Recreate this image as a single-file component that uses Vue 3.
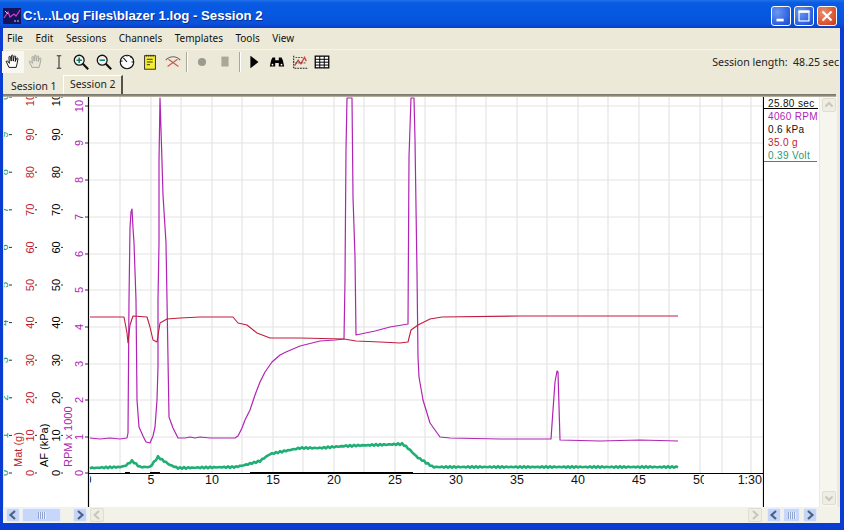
<script setup>
const menus = ['File', 'Edit', 'Sessions', 'Channels', 'Templates', 'Tools', 'View']

const toPts = (arr) => arr.map((p) => p.join(',')).join(' ')

const rpm = toPts([[90,438],[100,439],[110,438],[120,439],[127,438],[128,433],[129,300],[130,228],[131,212],[132,209],[133,228],[134,243],[136,300],[137,400],[139,427],[143,436],[146,442],[150,443],[153,436],[155,427],[157,400],[158,367],[158,300],[159,243],[159,195],[159,162],[160,98],[162,162],[163,195],[166,243],[167,300],[169,417],[173,428],[178,438],[185,438],[190,437],[195,438],[200,437],[210,438],[235,438],[238,436],[242,428],[245,420],[250,410],[255,395],[260,382],[265,372],[272,362],[280,355],[286,352],[300,346],[320,341],[335,340],[344,339],[345,280],[346,150],[347,98],[352,98],[353,197],[355,257],[356,335],[375,331],[390,327],[408,324],[409,157],[411,98],[414,98],[415,140],[417,273],[418,357],[419,377],[423,400],[430,423],[440,437],[450,438],[500,439],[551,439],[553,410],[555,382],[557,371],[558,372],[560,440],[600,441],[640,440],[678,441]])

const red = toPts([[90,317],[124,317],[127,333],[128,343],[130,325],[133,316],[147,317],[150,327],[153,340],[157,342],[160,323],[167,319],[180,318],[200,317],[233,317],[238,323],[247,325],[257,333],[270,338],[300,338],[344,339],[356,341],[380,342],[400,343],[408,342],[411,330],[418,325],[430,319],[442,317],[520,316],[678,316]])

const greenKeys = [[90,468],[120,467],[125,466],[132,461],[140,467],[150,467],[158,457],[170,465],[178,468],[235,467],[245,465],[260,461],[270,454],[285,451],[300,448],[320,448],[345,446],[403,444],[410,450],[417,457],[433,467],[450,467],[678,467]]
const green = toPts((() => {
  const out = []
  for (let x = 90; x <= 678; x += 2) {
    let i = 0
    while (i < greenKeys.length - 2 && greenKeys[i + 1][0] < x) i++
    const [x0, y0] = greenKeys[i]
    const [x1, y1] = greenKeys[i + 1]
    const y = y0 + ((y1 - y0) * (x - x0)) / (x1 - x0)
    out.push([x, +(y + Math.sin(x * 1.7) * 0.8).toFixed(1)])
  }
  return out
})())

const vGrid = [120, 151, 181, 212, 242, 273, 303, 334, 364, 395, 425, 456, 486, 517, 547, 578, 608, 639, 669, 700, 722, 751]
const hGrid = [437, 400, 364, 327, 290, 254, 217, 180, 143, 106]
const rpmTicks = hGrid.map((y, i) => ({ y, t: String(i + 1) }))
const tenTicks = Array.from({ length: 11 }, (_, i) => ({ y: 473 - i * 37.6, t: String(i * 10) }))
const voltTicks = Array.from({ length: 11 }, (_, i) => ({ y: 473 - i * 37.6, t: String(i % 10) }))
const xLabels = [5, 10, 15, 20, 25, 30, 35, 40, 45].map((n, i) => ({ x: 151 + i * 61, t: String(n) }))
const blackRuns = [[125, 130], [150, 160], [250, 413]]
</script>

<template>
  <div class="win">
    <header class="title">
      <svg class="app-icon" viewBox="0 0 18 16">
        <rect width="18" height="16" fill="#14145c" />
        <path d="M1 10 L5 4 L7 9 L11 6 L13 8 L17 2" fill="none" stroke="#d040c0" stroke-width="1.2" />
        <path d="M2 3 L5 6 M11 13 h2 M14 13 h2" fill="none" stroke="#c8d0f0" stroke-width="1" />
      </svg>
      <span class="title-text">C:\...\Log Files\blazer 1.log - Session 2</span>
      <div class="caps">
        <div class="cap blue">
          <svg viewBox="0 0 20 20"><rect x="5" y="13" width="8" height="3" fill="#fff" /></svg>
        </div>
        <div class="cap blue">
          <svg viewBox="0 0 20 20"><rect x="4.5" y="4.5" width="11" height="11" fill="none" stroke="#fff" stroke-width="1.3" /><rect x="4" y="4" width="12" height="2.5" fill="#fff" /></svg>
        </div>
        <div class="cap close">
          <svg viewBox="0 0 20 20"><path d="M5 5 L15 15 M15 5 L5 15" stroke="#fff" stroke-width="2.4" /></svg>
        </div>
      </div>
    </header>

    <div class="body">
      <nav class="menu">
        <span v-for="m in menus" :key="m">{{ m }}</span>
      </nav>

      <div class="toolbar">
        <div class="tool active">
          <svg viewBox="0 0 20 20"><path d="M5.5 16 L2.5 9.5 C2.5 8.5 4 8.5 4.5 9.5 L6 11.5 L5.5 4.5 C5.5 3.5 7 3.5 7.3 4.5 L8 9 L8.3 3 C8.4 2 10 2 10 3 L10.3 9 L11.3 3.8 C11.5 2.9 13 3 13 4 L12.5 9.5 L14 6 C14.4 5.2 15.7 5.6 15.5 6.6 L14.5 12 L13.5 16 Z" fill="#fff" stroke="#000" stroke-width="1" /></svg>
        </div>
        <div class="tool">
          <svg viewBox="0 0 20 20"><path d="M5.5 16 L2.5 9.5 C2.5 8.5 4 8.5 4.5 9.5 L6 11.5 L5.5 4.5 C5.5 3.5 7 3.5 7.3 4.5 L8 9 L8.3 3 C8.4 2 10 2 10 3 L10.3 9 L11.3 3.8 C11.5 2.9 13 3 13 4 L12.5 9.5 L14 6 C14.4 5.2 15.7 5.6 15.5 6.6 L14.5 12 L13.5 16 Z" fill="#e8e6da" stroke="#a8a89c" stroke-width="1.1" /></svg>
        </div>
        <div class="tool">
          <svg viewBox="0 0 20 20"><path d="M7.5 3 H12.5 M10 3 V17 M7.5 17 H12.5" stroke="#333" stroke-width="1.2" fill="none" /></svg>
        </div>
        <div class="tool">
          <svg viewBox="0 0 20 20"><circle cx="8" cy="8" r="5.5" fill="#eef4f4" stroke="#111" stroke-width="1.4" /><path d="M12 12 L18 18" stroke="#111" stroke-width="2.4" /><path d="M5 8 H11 M8 5 V11" stroke="#067a5a" stroke-width="1.6" /></svg>
        </div>
        <div class="tool">
          <svg viewBox="0 0 20 20"><circle cx="8" cy="8" r="5.5" fill="#eef4f4" stroke="#111" stroke-width="1.4" /><path d="M12 12 L18 18" stroke="#111" stroke-width="2.4" /><path d="M5 8 H11" stroke="#067a5a" stroke-width="1.6" /></svg>
        </div>
        <div class="tool">
          <svg viewBox="0 0 20 20"><circle cx="10" cy="10" r="7.5" fill="#fff" stroke="#111" stroke-width="1.3" /><path d="M10 10 L6 5.5 M5 9 L3.5 9 M14 5 L15 4 M10 4 L10 3 M15 10 L17 10" stroke="#111" stroke-width="1.2" /></svg>
        </div>
        <div class="tool">
          <svg viewBox="0 0 20 20"><rect x="4" y="3" width="12" height="15" fill="#f6ee2c" stroke="#222" stroke-width="1" /><path d="M6 2 V4 M8.500 2 V4 M11 2 V4 M13.500 2 V4 M6.500 7 H13 M6.500 10 H13 M6.500 13 H10" stroke="#222" stroke-width="1" /></svg>
        </div>
        <div class="tool">
          <svg viewBox="0 0 20 20"><path d="M2 8 C6 3 14 3 18 8" fill="none" stroke="#666" stroke-width="1.2" /><path d="M4 15 L15 7 M5 7 L16 15" stroke="#c9584c" stroke-width="1.2" /></svg>
        </div>
        <i class="sep"></i>
        <div class="tool">
          <svg viewBox="0 0 20 20"><circle cx="10" cy="10" r="4.5" fill="#9a9a90" /></svg>
        </div>
        <div class="tool">
          <svg viewBox="0 0 20 20"><rect x="6" y="4" width="8" height="11" fill="#a8a79a" /></svg>
        </div>
        <i class="sep"></i>
        <div class="tool">
          <svg viewBox="0 0 20 20"><path d="M6 3 L15 10 L6 17 Z" fill="#000" /></svg>
        </div>
        <div class="tool">
          <svg viewBox="0 0 20 20"><path d="M2 15 L3.500 8 L5 5 H8 V8 H12 V5 H15 L16.500 8 L18 15 H12 V11 H8 V15 Z" fill="#000" /><circle cx="5" cy="13" r="1" fill="#fff" /><circle cx="15" cy="13" r="1" fill="#fff" /></svg>
        </div>
        <div class="tool">
          <svg viewBox="0 0 20 20"><path d="M3 3 V17 H18" fill="none" stroke="#222" stroke-width="1.2" stroke-dasharray="2 1" /><path d="M4 14 L8 8 L11 12 L15 5 L17 9" fill="none" stroke="#d04040" stroke-width="1.5" /><path d="M5 5 H13 M5 11 H16" stroke="#444" stroke-width="1" stroke-dasharray="2 1" /></svg>
        </div>
        <div class="tool">
          <svg viewBox="0 0 20 20"><rect x="2.500" y="3.500" width="15" height="13" fill="#fff" stroke="#000" stroke-width="1.400" /><path d="M2.500 7 H17.500 M2.500 10.200 H17.500 M2.500 13.400 H17.500 M7.500 3.500 V16.500 M12.500 3.500 V16.500" stroke="#000" stroke-width="1.100" /></svg>
        </div>
        <span class="session-length">Session length:&nbsp; 48.25 sec</span>
      </div>

      <div class="tabs">
        <div class="tab">Session 1</div>
        <div class="tab current">Session 2</div>
      </div>
      <div class="rule"></div>

      <div class="chart-row">
        <svg class="plot" viewBox="4 97 760 410" width="760" height="410">
          <defs>
            <clipPath id="xclip"><rect x="90" y="474" width="614" height="20" /></clipPath>
            <clipPath id="plotclip"><rect x="89" y="97" width="674" height="377" /></clipPath>
          </defs>
          <rect x="4" y="97" width="760" height="410" fill="#fff" />

          <g stroke="#e4e4e4" stroke-width="1.200">
            <line v-for="x in vGrid" :key="x" :x1="x" :x2="x" y1="97" y2="473" />
            <line v-for="y in hGrid" :key="y" x1="89" x2="763" :y1="y" :y2="y" />
          </g>

          <g clip-path="url(#plotclip)" fill="none" stroke-linejoin="round">
            <polyline :points="green" stroke="#1fae74" stroke-width="2.600" />
            <polyline :points="rpm" stroke="#b024b4" stroke-width="1.200" />
            <polyline :points="red" stroke="#c21c3c" stroke-width="1.100" />
          </g>

          <g class="ytick volt">
            <g v-for="(k, i) in voltTicks" :key="i">
              <text :transform="`translate(8 ${k.y}) rotate(-90)`" text-anchor="middle">{{ k.t }}</text>
              <line x1="9" x2="12" :y1="k.y" :y2="k.y" stroke="#333" />
            </g>
          </g>
          <g class="ytick mat">
            <g v-for="k in tenTicks" :key="k.t">
              <text :transform="`translate(34 ${k.y}) rotate(-90)`" text-anchor="middle">{{ k.t }}</text>
              <line x1="35" x2="37" :y1="k.y" :y2="k.y" stroke="#333" />
            </g>
          </g>
          <g class="ytick af">
            <g v-for="k in tenTicks" :key="k.t">
              <text :transform="`translate(60 ${k.y}) rotate(-90)`" text-anchor="middle">{{ k.t }}</text>
              <line x1="61" x2="63" :y1="k.y" :y2="k.y" stroke="#333" />
            </g>
          </g>
          <g class="ytick rpm">
            <text transform="translate(83 473) rotate(-90)" text-anchor="middle">0</text>
            <line x1="85" x2="88" y1="473" y2="473" stroke="#333" />
            <g v-for="k in rpmTicks" :key="k.t">
              <text :transform="`translate(83 ${k.y}) rotate(-90)`" text-anchor="middle">{{ k.t }}</text>
              <line x1="85" x2="88" :y1="k.y" :y2="k.y" stroke="#333" />
            </g>
          </g>

          <text class="ytick mat" transform="translate(22 467) rotate(-90)">Mat (g)</text>
          <text class="ytick af" transform="translate(48 467) rotate(-90)">AF (kPa)</text>
          <text class="ytick rpm" transform="translate(72 467) rotate(-90)">RPM x 1000</text>

          <line x1="88.500" x2="88.500" y1="97" y2="507" stroke="#000" stroke-width="1.200" />
          <line x1="763.500" x2="763.500" y1="97" y2="507" stroke="#000" stroke-width="1.200" />
          <line x1="88" x2="764" y1="473.500" y2="473.500" stroke="#000" />
          <line v-for="r in blackRuns" :key="r[0]" :x1="r[0]" :x2="r[1]" y1="473" y2="473" stroke="#000" stroke-width="2" />

          <g class="xtick" clip-path="url(#xclip)">
            <text x="88" y="484" text-anchor="middle">0</text>
            <text v-for="l in xLabels" :key="l.t" :x="l.x" y="484" text-anchor="middle">{{ l.t }}</text>
            <text x="700" y="484" text-anchor="middle">50</text>
          </g>
          <text class="xtick" x="762" y="484" text-anchor="end">1:30</text>
        </svg>

        <div class="legend">
          <div class="lg time">25.80 sec</div>
          <div class="lg c-rpm">4060 RPM</div>
          <div class="lg c-af">0.6 kPa</div>
          <div class="lg c-mat">35.0 g</div>
          <div class="lg c-volt">0.39 Volt</div>
        </div>

        <div class="vscroll">
          <div class="sbtn off">
            <svg viewBox="0 0 12 12"><path d="M2.500 7.500 L6 4 L9.500 7.500" fill="none" stroke="#c9c7ba" stroke-width="2" /></svg>
          </div>
          <div class="sbtn off">
            <svg viewBox="0 0 12 12"><path d="M2.500 4.500 L6 8 L9.500 4.500" fill="none" stroke="#c9c7ba" stroke-width="2" /></svg>
          </div>
        </div>
      </div>

      <div class="hscroll-row">
        <div class="hs left">
          <div class="sbtn on">
            <svg viewBox="0 0 12 12"><path d="M8 2 L3.500 6 L8 10" fill="none" stroke="#4d6185" stroke-width="2.200" /></svg>
          </div>
          <div class="thumb wide"><span class="grip"></span></div>
          <div class="sbtn on push">
            <svg viewBox="0 0 12 12"><path d="M4 2 L8.500 6 L4 10" fill="none" stroke="#4d6185" stroke-width="2.200" /></svg>
          </div>
        </div>
        <div class="hs mid">
          <div class="sbtn off">
            <svg viewBox="0 0 12 12"><path d="M8 2 L3.500 6 L8 10" fill="none" stroke="#c9c7ba" stroke-width="2" /></svg>
          </div>
          <div class="sbtn off push">
            <svg viewBox="0 0 12 12"><path d="M4 2 L8.500 6 L4 10" fill="none" stroke="#c9c7ba" stroke-width="2" /></svg>
          </div>
        </div>
        <div class="hs right">
          <div class="sbtn on">
            <svg viewBox="0 0 12 12"><path d="M8 2 L3.500 6 L8 10" fill="none" stroke="#4d6185" stroke-width="2.200" /></svg>
          </div>
          <div class="thumb narrow"><span class="grip"></span></div>
          <div class="sbtn on">
            <svg viewBox="0 0 12 12"><path d="M4 2 L8.500 6 L4 10" fill="none" stroke="#4d6185" stroke-width="2.200" /></svg>
          </div>
        </div>
      </div>
    </div>
  </div>
</template>

<style>
html, body { margin: 0; background: #0a3ad0; }
</style>

<style scoped>
.win {
  width: 844px;
  height: 530px;
  overflow: hidden;
  display: flex;
  flex-direction: column;
  background: #0a3cd2;
  font-family: "Liberation Sans", Arial, sans-serif;
}
.title {
  height: 28px;
  flex: none;
  display: flex;
  align-items: center;
  padding: 3px 7px 0 3px;
  box-sizing: border-box;
  background: linear-gradient(#1f72e6 0, #0a5ae2 3px, #0558e0 14px, #0a50d8 24px, #0a3ccc 28px);
}
.app-icon { width: 18px; height: 16px; }
.title-text {
  margin-left: 2px;
  color: #fff;
  font: bold 13.200px "Liberation Sans", Arial, sans-serif;
  white-space: nowrap;
  text-shadow: 1px 1px 0 #0a2c9c;
}
.caps { margin-left: auto; display: flex; gap: 3px; }
.cap { width: 20px; height: 20px; border: 1px solid #fff; border-radius: 3px; box-sizing: border-box; }
.cap svg { display: block; width: 18px; height: 18px; }
.cap.blue { background: radial-gradient(circle at 30% 30%, #6c98f0, #2a5ee0 70%, #1c48c4); }
.cap.close { background: radial-gradient(circle at 30% 30%, #e89070, #d8502c 70%, #b83c18); }

.body {
  width: 837px;
  height: 495px;
  margin-left: 3px;
  flex: none;
  background: #ece9d8;
  display: flex;
  flex-direction: column;
}
.menu {
  height: 22px;
  flex: none;
  display: flex;
  align-items: center;
  gap: 12.5px;
  padding: 0 0 2px 4px;
  box-sizing: border-box;
  font: 10px "Noto Sans", Tahoma, sans-serif;
  color: #111;
  border-bottom: 1px solid #f6f5ec;
}
.toolbar {
  height: 24px;
  flex: none;
  display: flex;
  align-items: center;
  box-sizing: border-box;
}
.tool {
  width: 22.800px;
  height: 22px;
  flex: none;
  display: flex;
  align-items: center;
  justify-content: center;
}
.tool.active { margin-left: -1.400px; background: #f8f7f1; }
.tool svg { width: 18px; height: 18px; }
.sep {
  width: 1px;
  height: 20px;
  flex: none;
  margin: 0 3px 0 2.500px;
  background: #aca899;
  box-shadow: 1px 0 0 #fff;
}
.session-length {
  margin-left: auto;
  margin-right: 1px;
  font: 10.600px "Noto Sans", Tahoma, sans-serif;
  color: #222;
  white-space: nowrap;
}
.tabs {
  height: 20px;
  flex: none;
  display: flex;
  align-items: flex-end;
  padding-left: 2px;
}
.tab {
  font: 10.400px "Noto Sans", Tahoma, sans-serif;
  color: #222;
  height: 16px;
  line-height: 16px;
  width: 57px;
  box-sizing: border-box;
  padding-left: 6px;
  white-space: nowrap;
}
.tab.current {
  height: 19px;
  line-height: 17px;
  width: 60px;
  margin-left: 1px;
  padding-left: 6px;
  border-top: 1px solid #fff;
  border-left: 1px solid #fff;
  border-right: 2px solid #55524a;
}
.rule {
  height: 3px;
  flex: none;
  width: 833px;
  background: linear-gradient(#77736a, #8f8b7e 60%, #c9c6b6);
}
.chart-row {
  height: 410px;
  flex: none;
  display: flex;
  padding-left: 1px;
}
.plot { flex: none; display: block; }
.ytick text, text.ytick { font: 11px "Liberation Sans", Arial, sans-serif; }
.volt text { fill: #1f9a70; }
.mat text, text.mat { fill: #c01c30; }
.af text, text.af { fill: #000; }
.rpm text, text.rpm { fill: #b024b4; }
.xtick text, text.xtick { font: 12.500px "Liberation Sans", Arial, sans-serif; fill: #111; }

.legend {
  width: 55px;
  flex: none;
  background: #fff;
  box-sizing: border-box;
  padding-top: 1px;
}
.lg {
  height: 13px;
  font: 10px/13px "Liberation Sans", Arial, sans-serif;
  letter-spacing: .35px;
  padding-left: 4px;
  white-space: nowrap;
}
.lg.time { border-bottom: 1px solid #000; color: #111; height: 10px; line-height: 11px; margin-right: 1px; }
.c-rpm { color: #b024b4; margin-top: 1px; }
.c-af { color: #111; }
.c-mat { color: #c01c30; }
.c-volt { color: #1f9a70; border-bottom: 1px solid #1f9a70; margin-right: 2px; height: 12px; }

.vscroll {
  width: 17px;
  margin-left: 1px;
  flex: none;
  background: #f6f5ee;
  display: flex;
  flex-direction: column;
  justify-content: space-between;
  align-items: center;
  padding: 1px 0 2px;
  box-sizing: border-box;
}
.hscroll-row {
  height: 16px;
  flex: none;
  display: flex;
  background: #f3f2e8;
}
.hs { display: flex; align-items: center; height: 100%; }
.hs.left { width: 81px; margin-left: 3px; flex: none; }
.hs.mid { width: 672px; margin-left: 3px; flex: none; }
.hs.right { width: 51px; margin-left: 5px; flex: none; }
.push { margin-left: auto; }
.sbtn {
  width: 14px;
  height: 14px;
  flex: none;
  border-radius: 2px;
  box-sizing: border-box;
  display: flex;
  align-items: center;
  justify-content: center;
}
.sbtn svg { width: 12px; height: 12px; }
.sbtn.on { background: #c4d5f8; border: 1px solid #e4ecfb; }
.sbtn.off { background: #efeee4; border: 1px solid #e0ded0; }
.thumb {
  height: 14px;
  margin-left: 2px;
  background: #c6d7f9;
  border: 1px solid #e8eefb;
  border-radius: 2px;
  box-sizing: border-box;
  display: flex;
  align-items: center;
  justify-content: center;
}
.thumb.wide { width: 39px; }
.thumb.narrow { width: 17px; margin-right: 3px; }
.grip {
  width: 8px;
  height: 7px;
  background: repeating-linear-gradient(90deg, #8fa4d0 0 1px, #e8eefc 1px 2px);
}
</style>
